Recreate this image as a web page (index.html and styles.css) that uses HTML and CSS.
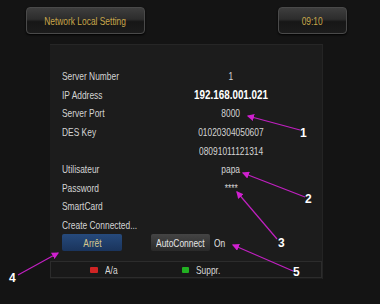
FILE: index.html
```html
<!DOCTYPE html>
<html>
<head>
<meta charset="utf-8">
<link rel="stylesheet" href="styles.css">
</head>
<body>
<div class="screen">
  <div class="header">
    <div class="hbtn title"><span class="t c">Network Local Setting</span></div>
    <div class="hbtn clock"><span class="t c">09:10</span></div>
  </div>
  <div class="panel">
    <div class="grid">
      <div class="lbl"><span class="t">Server Number</span></div><div class="val"><span class="t c">1</span></div>
      <div class="lbl"><span class="t">IP Address</span></div><div class="val ip"><span class="t c">192.168.001.021</span></div>
      <div class="lbl"><span class="t">Server Port</span></div><div class="val"><span class="t c">8000</span></div>
      <div class="lbl"><span class="t">DES Key</span></div><div class="val"><span class="t c">01020304050607</span></div>
      <div class="lbl"></div><div class="val"><span class="t c">08091011121314</span></div>
      <div class="lbl"><span class="t">Utilisateur</span></div><div class="val"><span class="t c">papa</span></div>
      <div class="lbl"><span class="t">Password</span></div><div class="val"><span class="t c">****</span></div>
      <div class="lbl"><span class="t">SmartCard</span></div><div class="val"></div>
      <div class="lbl"><span class="t">Create Connected...</span></div><div class="val"></div>
    </div>
    <div class="btnrow">
      <div class="btn stop"><span class="t c">Arrêt</span></div>
      <div class="btn auto"><span class="t c">AutoConnect</span></div>
      <div class="on"><span class="t">On</span></div>
    </div>
    <div class="footer">
      <span class="key red"></span><span class="ktxt k1"><span class="t">A/a</span></span>
      <span class="key green"></span><span class="ktxt"><span class="t">Suppr.</span></span>
    </div>
  </div>
  <svg class="notes" width="380" height="304" viewBox="0 0 380 304">
    <defs>
      <marker id="ah" markerWidth="6" markerHeight="6" refX="5" refY="3" orient="auto">
        <path d="M0,0 L6,3 L0,6 Z" fill="#d020d0"/>
      </marker>
    </defs>
    <g stroke="#c020c0" stroke-width="1.2" fill="none" marker-end="url(#ah)">
      <line x1="300" y1="130" x2="248" y2="116"/>
      <line x1="305" y1="197" x2="243" y2="173"/>
      <line x1="277" y1="239" x2="237" y2="192"/>
      <line x1="18" y1="275" x2="58" y2="253"/>
      <line x1="293" y1="271" x2="233" y2="245"/>
    </g>
    <g class="num">
      <text x="300" y="137">1</text>
      <text x="305" y="203">2</text>
      <text x="278" y="247">3</text>
      <text x="9" y="282">4</text>
      <text x="293" y="276">5</text>
    </g>
  </svg>
</div>
</body>
</html>
```
FILE: styles.css
```css
html, body {
  margin: 0;
  padding: 0;
  background: #131313;
}
.screen {
  position: relative;
  width: 380px;
  height: 304px;
  overflow: hidden;
  font-family: "Liberation Sans", Arial, sans-serif;
  font-size: 10px;
  color: #d8d8d8;
  background: #141414;
}
.t {
  display: inline-block;
  white-space: nowrap;
  transform: scaleX(0.8);
  transform-origin: left center;
}
.t.c {
  transform-origin: center center;
}
.header {
  display: flex;
  padding-top: 7px;
  height: 27px;
}
.hbtn {
  height: 27px;
  box-sizing: border-box;
  border: 1px solid #4a4a4a;
  border-radius: 4px;
  background: linear-gradient(#3e3e3e 0%, #2c2c2c 45%, #161616 55%, #1c1c1c 100%);
  color: #c9a84c;
  display: flex;
  align-items: center;
  justify-content: center;
  font-size: 10.5px;
  box-shadow: 0 1px 2px #000;
}
.title {
  margin-left: 26px;
  width: 119px;
}
.clock {
  margin-left: 133px;
  width: 69px;
}
.panel {
  margin-left: 50px;
  margin-top: 10px;
  width: 273px;
  height: 235px;
  box-sizing: border-box;
  background: #1c1c1c;
  border-top: 1px solid #262626;
  border-right: 1px solid #242424;
  padding: 22px 0 0 12px;
}
.grid {
  display: grid;
  grid-template-columns: 119px 100px;
  grid-auto-rows: 18.6px;
  align-items: center;
}
.lbl {
  color: #d4d4d4;
  font-size: 10.5px;
}
.val {
  text-align: center;
  color: #d4d4d4;
  font-size: 10.5px;
}
.val.ip {
  font-weight: bold;
  color: #ffffff;
  font-size: 12px;
}
.val.ip .t {
  transform: scaleX(0.82);
}
.btnrow {
  display: flex;
  align-items: center;
  height: 17px;
}
.btn {
  height: 17px;
  box-sizing: border-box;
  display: flex;
  align-items: center;
  justify-content: center;
  font-size: 10.5px;
}
.stop {
  width: 60px;
  background: linear-gradient(#264a7c, #1a345c);
  color: #d6c88e;
  border-radius: 2px;
}
.auto {
  margin-left: 29px;
  width: 59px;
  background: linear-gradient(#444444, #2a2a2a);
  color: #e6e6e6;
  border-radius: 2px;
}
.on {
  margin-left: 4px;
  color: #e0e0e0;
  font-size: 10.5px;
}
.footer {
  margin-left: -12px;
  margin-top: 10px;
  height: 17px;
  box-sizing: border-box;
  border: 1px solid #2c2c2c;
  background: #191919;
  display: flex;
  align-items: center;
  padding-left: 39px;
  font-size: 10.5px;
}
.key {
  width: 8px;
  height: 6px;
  border-radius: 1px;
}
.key.red {
  background: #d02424;
}
.key.green {
  background: #22b022;
  width: 7px;
}
.ktxt {
  margin-left: 7px;
  color: #d8d8d8;
}
.ktxt.k1 {
  width: 77px;
}
.notes {
  position: absolute;
  left: 0;
  top: 0;
}
.num text {
  fill: #ffffff;
  font-family: "Liberation Sans", Arial, sans-serif;
  font-weight: bold;
  font-size: 12px;
}
```
